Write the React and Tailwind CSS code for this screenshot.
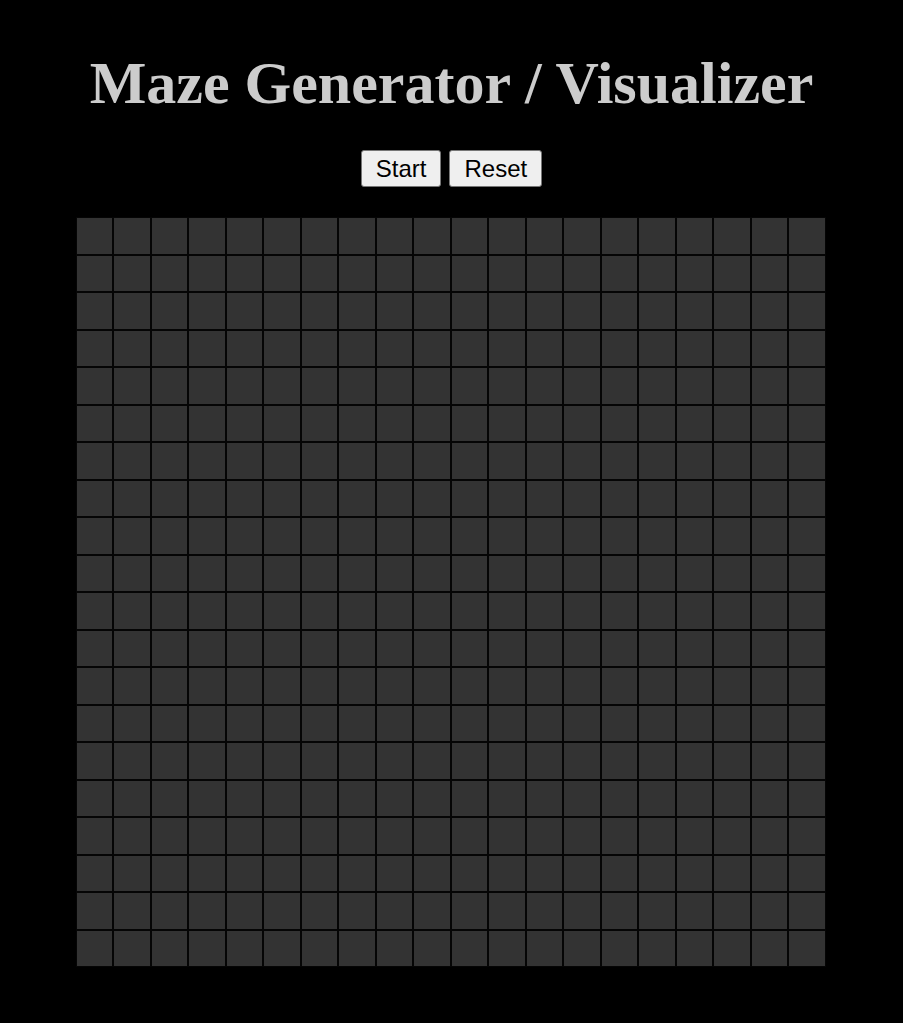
import React from 'react';

const SIZE = 20;

const App = () => {
  const cells = Array.from({ length: SIZE * SIZE }, (_, i) => i);

  return (
    <div className="min-h-screen bg-black flex flex-col items-center">
      {/* Title */}
      <h1
        className="mt-[49px] text-[60px] leading-[69px] font-bold text-[#cccccc]"
        style={{ fontFamily: '"Liberation Serif", "Times New Roman", serif' }}
      >
        Maze Generator / Visualizer
      </h1>

      {/* Controls */}
      <div
        className="mt-[32px] flex gap-2"
        style={{ fontFamily: '"Liberation Sans", Arial, sans-serif' }}
      >
        <button className="h-[37px] px-[14px] text-[24px] leading-[27px] text-black bg-[#efefef] border border-[#767676] rounded-[3px]">
          Start
        </button>
        <button className="h-[37px] px-[14px] text-[24px] leading-[27px] text-black bg-[#efefef] border border-[#767676] rounded-[3px]">
          Reset
        </button>
      </div>

      {/* Grid */}
      <div className="mt-[30px] mr-[2px] w-[750px] h-[750px] grid grid-cols-20 grid-rows-20">
        {cells.map((i) => (
          <div key={i} className="bg-[#333333] border border-[#050505]" />
        ))}
      </div>
    </div>
  );
};

export default App;
